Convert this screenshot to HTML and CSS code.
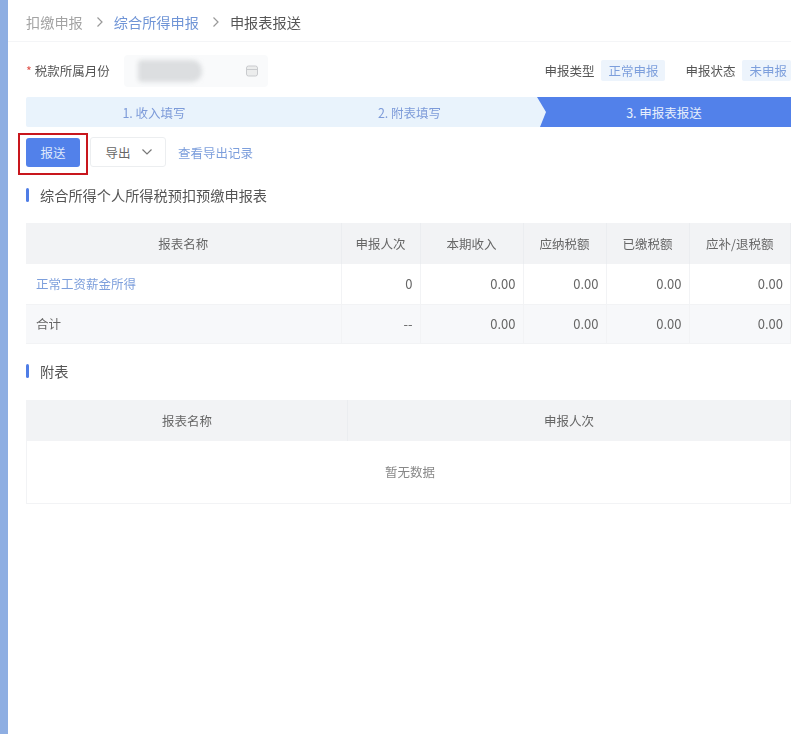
FILE: index.html
```html
<!DOCTYPE html>
<html lang="zh-CN">
<head>
  <meta charset="UTF-8" />
  <title>申报表报送</title>
  <link rel="stylesheet" href="styles.css">
</head>
<body>
  <div class="side-strip"></div>
  <div class="main">
    <div class="breadcrumb">
      <span class="crumb-muted">扣缴申报</span>
      <svg class="crumb-arrow" viewBox="0 0 8 12"><path d="M1.5 1.5 6 6l-4.5 4.5" /></svg>
      <span class="crumb-link">综合所得申报</span>
      <svg class="crumb-arrow" viewBox="0 0 8 12"><path d="M1.5 1.5 6 6l-4.5 4.5" /></svg>
      <span class="crumb-current">申报表报送</span>
    </div>

    <div class="content">
      <div class="filter-row">
        <div class="month-field">
          <span class="required">*</span>
          <span class="field-label">税款所属月份</span>
          <div class="month-input">
            <div class="month-blur"></div>
            <svg class="calendar" viewBox="0 0 12 12"><rect x="0.5" y="1" width="11" height="10" rx="2" /><path d="M1 4.5h10" /></svg>
          </div>
        </div>
        <div class="status-group">
          <span class="field-label">申报类型</span>
          <span class="tag tag-type">正常申报</span>
          <span class="field-label status-label">申报状态</span>
          <span class="tag">未申报</span>
        </div>
      </div>

      <div class="steps">
        <div class="step step-one">1. 收入填写</div>
        <div class="step step-two">2. 附表填写</div>
        <div class="step step-active">
          <svg class="step-notch" viewBox="0 0 10 30" preserveAspectRatio="none"><path d="M0 0 9 15 3 30H0Z" /></svg>
          3. 申报表报送
        </div>
      </div>

      <div class="toolbar">
        <div class="submit-outline"><button class="btn-primary">报送</button></div>
        <button class="btn-export">导出
          <svg class="chevron" viewBox="0 0 12 8"><path d="M1.5 1.5 6 6l4.5-4.5" /></svg>
        </button>
        <a class="export-log">查看导出记录</a>
      </div>

      <div class="section-title section-first"><i></i>综合所得个人所得税预扣预缴申报表</div>
      <table class="report">
        <colgroup>
          <col class="col-name"><col class="col-count"><col class="col-income">
          <col class="col-money"><col class="col-money"><col class="col-last">
        </colgroup>
        <thead>
          <tr><th>报表名称</th><th>申报人次</th><th>本期收入</th><th>应纳税额</th><th>已缴税额</th><th>应补/退税额</th></tr>
        </thead>
        <tbody>
          <tr><td class="left link">正常工资薪金所得</td><td>0</td><td>0.00</td><td>0.00</td><td>0.00</td><td>0.00</td></tr>
          <tr class="total"><td class="left">合计</td><td>--</td><td>0.00</td><td>0.00</td><td>0.00</td><td>0.00</td></tr>
        </tbody>
      </table>

      <div class="section-title section-second"><i></i>附表</div>
      <table class="report attach">
        <colgroup><col class="col-attach"><col></colgroup>
        <thead>
          <tr><th>报表名称</th><th>申报人次</th></tr>
        </thead>
        <tbody>
          <tr><td class="empty" colspan="2">暂无数据</td></tr>
        </tbody>
      </table>
    </div>
  </div>
</body>
</html>
```

FILE: styles.css
```css
body {
  margin: 0;
  height: 734px;
  overflow: hidden;
  display: flex;
  background: #fff;
  color: #555;
  font-family: "Noto Sans CJK SC", "Liberation Sans", sans-serif;
  font-size: 12.5px;
}
.side-strip {
  width: 8px;
  flex-shrink: 0;
  background: #8eaee2;
}
.main {
  flex: 1;
  min-width: 0;
  overflow: hidden;
  filter: blur(0.35px);
}
.breadcrumb {
  height: 42px;
  box-sizing: border-box;
  display: flex;
  align-items: center;
  padding: 2px 0 0 18px;
  border-bottom: 1px solid #f4f5f7;
  font-size: 14.2px;
}
.crumb-muted { color: #a3a3a3; }
.crumb-link { color: #6f94d6; }
.crumb-current { color: #555; }
.crumb-arrow {
  width: 8px;
  height: 12px;
  margin: 0 10px 0 13px;
  fill: none;
  stroke: #999;
  stroke-width: 1.2;
}
.content {
  padding: 0 0 0 18px;
}
.filter-row {
  height: 55px;
  box-sizing: border-box;
  padding-top: 2px;
  display: flex;
  align-items: center;
  justify-content: space-between;
}
.month-field {
  display: flex;
  align-items: center;
}
.required {
  color: #e0574f;
  margin: 0 3px 0 0;
}
.field-label {
  color: #555;
}
.month-input {
  width: 144px;
  height: 32px;
  box-sizing: border-box;
  margin-left: 14px;
  padding: 0 10px 0 14px;
  background: #f9fafb;
  border-radius: 4px;
  display: flex;
  align-items: center;
  justify-content: space-between;
}
.month-blur {
  width: 64px;
  height: 22px;
  background: #dcdee0;
  border-radius: 4px 10px 10px 4px;
  filter: blur(2px);
}
.calendar {
  width: 12px;
  height: 12px;
  fill: #eceded;
  stroke: #c9cbce;
}
.status-group {
  display: flex;
  align-items: center;
}
.tag {
  margin-left: 7px;
  padding: 0 4px 0 7px;
  height: 21px;
  line-height: 21px;
  background: #edf4fc;
  color: #7d9fdc;
  border-radius: 2px;
}
.tag-type { padding: 0 7px; }
.status-label { margin-left: 20px; }
.steps {
  height: 30px;
  display: flex;
  background: #e9f3fc;
  border-radius: 2px 0 0 2px;
  overflow: hidden;
}
.step {
  display: flex;
  align-items: center;
  justify-content: center;
  color: #7d9bd9;
}
.step-one { width: 256px; }
.step-two { width: 255px; }
.step-active {
  flex: 1;
  position: relative;
  background: #5281ea;
  color: #e8effc;
}
.step-notch {
  position: absolute;
  left: 0;
  top: 0;
  width: 10px;
  height: 30px;
  fill: #e9f3fc;
}
.toolbar {
  height: 48px;
  display: flex;
  align-items: center;
  margin-top: 1px;
}
.submit-outline {
  margin: 4px 0 0 -8px;
  padding: 3px 6px 6px;
  border: 2px solid #c8161d;
}
.btn-primary {
  display: block;
  width: 54px;
  height: 29px;
  padding: 0;
  border: none;
  border-radius: 3px;
  background: #5281ea;
  color: #dfe8fb;
  font: inherit;
}
.btn-export {
  width: 76px;
  height: 30px;
  margin-left: 2px;
  padding: 0 0 0 2px;
  background: #fff;
  border: 1px solid #eceef0;
  border-radius: 3px;
  color: #666;
  font: inherit;
  display: flex;
  align-items: center;
  justify-content: center;
  gap: 10px;
}
.chevron {
  width: 12px;
  height: 8px;
  fill: none;
  stroke: #777;
  stroke-width: 1.2;
}
.export-log {
  margin-left: 12px;
  color: #7d9fdc;
}
.section-title {
  position: relative;
  display: flex;
  align-items: center;
  padding-left: 14px;
  height: 20px;
  font-size: 14.2px;
  color: #555;
}
.section-title i {
  position: absolute;
  left: 0;
  top: 3px;
  width: 3px;
  height: 14px;
  border-radius: 2px;
  background: #4f7de6;
}
.section-first { margin-top: 9px; }
.section-second { margin-top: 17px; }
.report {
  width: 765px;
  border-collapse: collapse;
  table-layout: fixed;
  margin-top: 18px;
  color: #666;
}
.section-second + .report { margin-top: 19px; }
.col-name { width: 315px; }
.col-count { width: 79px; }
.col-income { width: 103px; }
.col-money { width: 83px; }
.col-attach { width: 321px; }
.report th {
  height: 41px;
  padding: 0;
  background: #f2f3f5;
  font-weight: 400;
  border-right: 1px solid #ebedf0;
  text-align: center;
}
.attach th:first-child {
  border-left: 1px solid #f2f3f5;
}
.report td {
  height: 40px;
  padding: 0 7px 0 10px;
  box-sizing: border-box;
  text-align: right;
  font-size: 13px;
  border-right: 1px solid #f2f3f5;
  border-bottom: 1px solid #f2f3f5;
}
.report td.left {
  text-align: left;
  font-size: 12.5px;
}
.report td.link { color: #7d9fdc; }
.report .total td {
  background: #f7f8fa;
  height: 39px;
}
.report td.empty {
  height: 63px;
  text-align: center;
  font-size: 12.5px;
  color: #888;
  border-left: 1px solid #f2f3f5;
}
```
